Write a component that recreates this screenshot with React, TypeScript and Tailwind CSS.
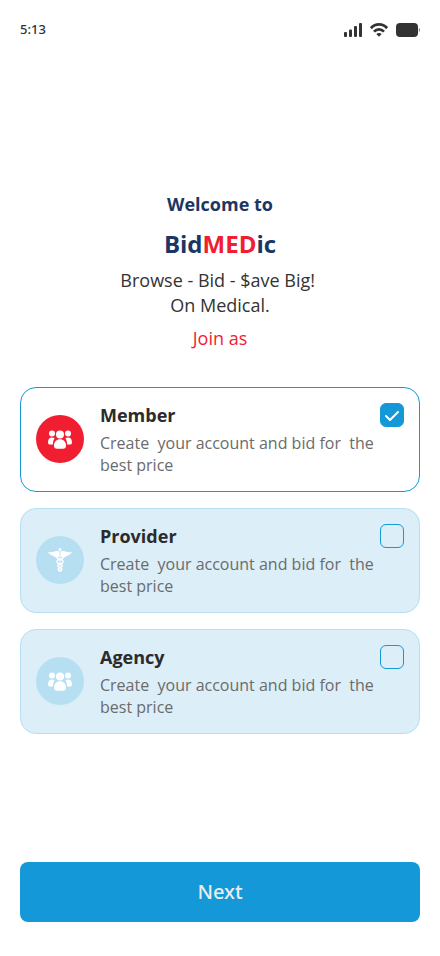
import { useState, type ReactNode } from "react";

function SignalIcon() {
  return (
    <svg width="18" height="14" viewBox="0 0 18 14" fill="currentColor" aria-hidden="true">
      <rect x="0" y="9" width="3" height="5" rx="1" />
      <rect x="5" y="6.500" width="3" height="7.500" rx="1" />
      <rect x="10" y="3" width="3" height="11" rx="1" />
      <rect x="15" y="0" width="3" height="14" rx="1" />
    </svg>
  );
}

function WifiIcon() {
  return (
    <svg width="18" height="14" viewBox="0 0 18 14" fill="none" stroke="currentColor" strokeWidth="2.800" aria-hidden="true">
      <path d="M0.900 5.200C5.500 0.200 12.500 0.200 17.100 5.200" />
      <path d="M4 8.600C6.900 5.600 11.100 5.600 14 8.600" />
      <path d="M6.300 11C7.800 9.500 10.200 9.500 11.700 11L9 13.700Z" fill="currentColor" stroke="none" />
    </svg>
  );
}

function BatteryIcon() {
  return (
    <svg width="24" height="14" viewBox="0 0 24 14" fill="currentColor" aria-hidden="true">
      <rect width="22" height="14" rx="4" />
      <path d="M22.800 5C24.400 5.600 24.400 8.400 22.800 9Z" opacity="0.6" />
    </svg>
  );
}

function PeopleIcon() {
  return (
    <svg width="24" height="24" viewBox="0 0 24 24" fill="currentColor" aria-hidden="true">
      <circle cx="4" cy="6.600" r="3" />
      <circle cx="20" cy="6.600" r="3" />
      <circle cx="12" cy="7.400" r="4" />
      <path d="M6.600 11.300C5.700 10.800 4.700 10.600 3.800 10.600C1.500 10.600 0 12.500 0 15C0 17 0.700 17.600 2 17.600H4.900C4.900 15 5.500 12.900 6.600 11.300Z" />
      <path d="M17.400 11.300C18.300 10.800 19.300 10.600 20.200 10.600C22.500 10.600 24 12.500 24 15C24 17 23.300 17.600 22 17.600H19.100C19.100 15 18.500 12.900 17.400 11.300Z" />
      <path d="M12 12.200C8.500 12.200 6 14.900 6 18.300C6 21 7 21.700 9 21.700H15C17 21.700 18 21 18 18.300C18 14.900 15.500 12.200 12 12.200Z" />
    </svg>
  );
}

function CaduceusIcon() {
  return (
    <svg width="24" height="24" viewBox="0 0 24 24" fill="currentColor" aria-hidden="true">
      <circle cx="12" cy="1.500" r="1.500" />
      <path d="M11.400 4.400C10.400 3 9.300 2.700 7.800 3.100C5.500 4.200 2.800 4.300 0 4.300C0.500 5.300 1.300 5.800 2.200 5.900C2.600 6.900 3.300 7.300 4.200 7.300C4.700 8.400 5.700 8.800 7 8.500L7.600 9.700L11.400 8.700Z" />
      <path d="M12.600 4.400C13.600 3 14.700 2.700 16.200 3.100C18.500 4.200 21.200 4.300 24 4.300C23.500 5.300 22.700 5.800 21.800 5.900C21.400 6.900 20.700 7.300 19.800 7.300C19.300 8.400 18.300 8.800 17 8.500L16.400 9.700L12.600 8.700Z" />
      <path d="M12 3V24" fill="none" stroke="currentColor" strokeWidth="0.800" />
      <path
        d="M9 8.500C8 11 12 11 14 12.200C16 13.400 15.400 15.200 12 16C9 16.800 8.800 18.800 12 19.600C14.600 20.300 14.600 22 12 23M15 8.500C16 11 12 11 10 12.200C8 13.400 8.600 15.200 12 16C15 16.800 15.200 18.800 12 19.600C9.400 20.300 9.400 22 12 23"
        fill="none"
        stroke="currentColor"
        strokeWidth="1.400"
        strokeLinecap="round"
      />
    </svg>
  );
}

type Role = { id: string; title: string; description: string; icon: ReactNode };

const description = "Create \u00a0your account and bid for \u00a0the best price";

const roles: Role[] = [
  { id: "member", title: "Member", description, icon: <PeopleIcon /> },
  { id: "provider", title: "Provider", description, icon: <CaduceusIcon /> },
  { id: "agency", title: "Agency", description, icon: <PeopleIcon /> },
];

function RoleCard({ role, selected, onSelect }: { role: Role; selected: boolean; onSelect: () => void }) {
  return (
    <label
      htmlFor={role.id}
      className={`flex cursor-pointer items-center gap-4 rounded-2xl border p-[15px] ${
        selected ? "border-[#1598d7] bg-white" : "border-[#b6dff2] bg-[#dceef8]"
      }`}
    >
      <span
        className={`flex size-12 shrink-0 items-center justify-center rounded-full text-white ${
          selected ? "bg-[#f11d31]" : "bg-[#b6dff2]"
        }`}
      >
        {role.icon}
      </span>
      <span className="flex min-w-0 flex-1 flex-col gap-1">
        <span className="text-lg/[25px] font-bold text-[#2b2b2b]">{role.title}</span>
        <span className="text-base/[22px] text-[#6b6b6b]">{role.description}</span>
      </span>
      <span className="-ml-4 grid size-6 shrink-0 self-start">
        <input
          id={role.id}
          type="checkbox"
          checked={selected}
          onChange={onSelect}
          className="col-start-1 row-start-1 size-6 cursor-pointer appearance-none rounded-md border border-[#1598d7] checked:bg-[#1598d7]"
        />
        {selected && (
          <svg
            viewBox="0 0 24 24"
            fill="none"
            stroke="white"
            strokeWidth="2"
            strokeLinecap="round"
            strokeLinejoin="round"
            className="pointer-events-none col-start-1 row-start-1 size-6"
            aria-hidden="true"
          >
            <path d="M6 13L10 17L18 9" />
          </svg>
        )}
      </span>
    </label>
  );
}

export default function App() {
  const [selected, setSelected] = useState("member");

  return (
    <div className="flex min-h-screen flex-col bg-white px-5 pb-[34px] font-['Open_Sans','Noto_Sans',sans-serif]">
      <header className="flex h-[60px] items-center justify-between text-[#333333]">
        <span className="font-['Noto_Sans','Open_Sans',sans-serif] text-[13px] font-medium">5:13</span>
        <span className="flex items-center gap-2">
          <SignalIcon />
          <WifiIcon />
          <BatteryIcon />
        </span>
      </header>

      <main className="flex flex-1 flex-col justify-center pt-[3px]">
        <div className="flex flex-col text-center text-lg/[25px] text-[#333333]">
          <p className="font-bold text-[#1b3664]">Welcome to</p>
          <h1 className="mt-2 text-2xl/[38px] font-bold text-[#1b3664]">
            Bid<span className="text-[#f11d31]">MED</span>ic
          </h1>
          <p className="mt-[5px]">
            {"Browse - Bid - $ave Big!\u00a0"}
            <br />
            On Medical.
          </p>
          <p className="mt-2 text-[#f11d31]">Join as</p>
        </div>

        <div className="mt-9 flex flex-col gap-4">
          {roles.map((role) => (
            <RoleCard
              key={role.id}
              role={role}
              selected={selected === role.id}
              onSelect={() => setSelected(role.id)}
            />
          ))}
        </div>
      </main>

      <button
        type="button"
        className="h-[60px] rounded-lg bg-[#1598d7] font-['Noto_Sans','Open_Sans',sans-serif] text-xl font-medium text-[#ececec]"
      >
        Next
      </button>
    </div>
  );
}
